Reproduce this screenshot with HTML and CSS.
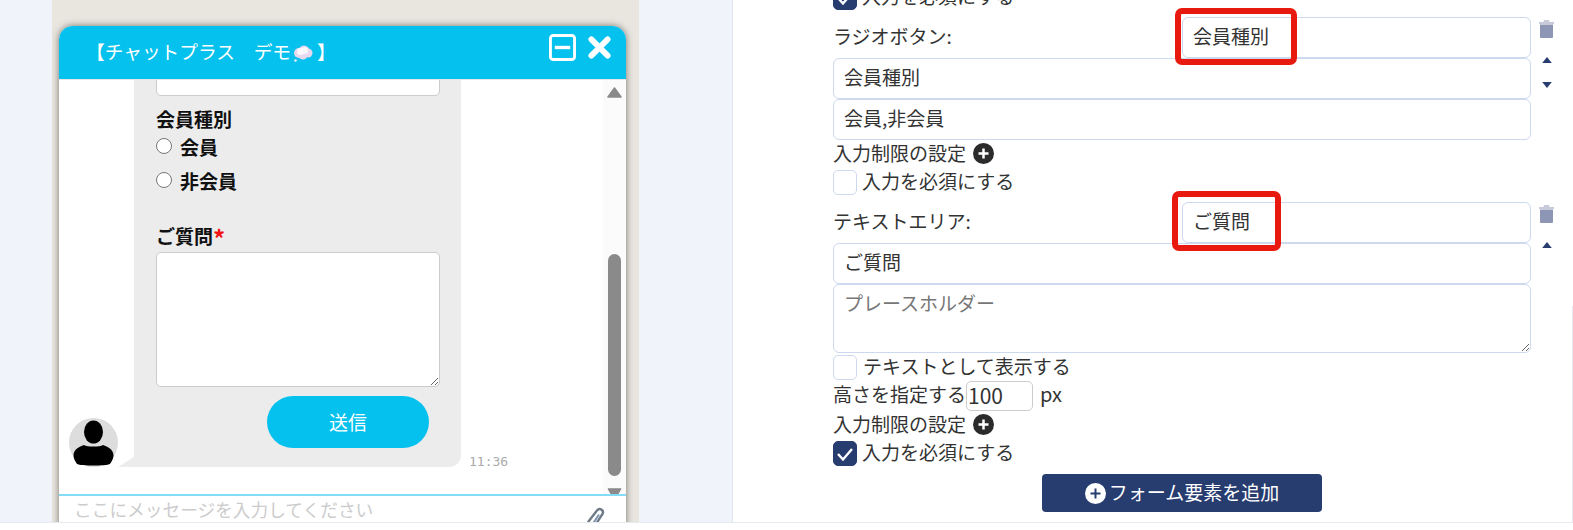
FILE: index.html
```html
<!DOCTYPE html>
<html lang="ja">
<head>
    <meta charset="UTF-8">
    <title>チャットフォーム設定</title>
    <link rel="stylesheet" href="styles.css">
</head>
<body>
    <div class="screen">
        <section class="preview">
            <div class="chat">
                <header class="chat-head">
                    <h1 class="chat-title">【チャットプラス　デモ<svg class="balloon" viewBox="0 0 20 17"><circle cx="2.500" cy="15.500" r="1.300" fill="#f3e9f6"/><g fill="#e6d8ee"><circle cx="6" cy="8" r="5"/><circle cx="11" cy="6" r="5.500"/><circle cx="15" cy="8" r="4.500"/><circle cx="10" cy="10" r="4.500"/></g><g fill="#fbf8fd"><circle cx="7.500" cy="6.500" r="3.500"/><circle cx="11.500" cy="5.500" r="3.500"/></g></svg>】</h1>
                    <div class="chat-tools">
                        <svg class="tool-min" viewBox="0 0 28 28"><rect x="1.500" y="1.500" width="25" height="25" rx="3" fill="none" stroke="#fff" stroke-width="3"/><path d="M6 14h16" stroke="#fff" stroke-width="3.500"/></svg>
                        <svg class="tool-close" viewBox="0 0 24 24"><path d="M3.500 3.500l17 17M20.500 3.500l-17 17" stroke="#fff" stroke-width="6" stroke-linecap="round"/></svg>
                    </div>
                </header>
                <div class="chat-main">
                    <div class="chat-log">
                        <div class="message">
                            <svg class="avatar" viewBox="0 0 49 49"><circle cx="24.500" cy="24.500" r="24.500" fill="#ddd"/><ellipse cx="24.500" cy="14" rx="9.500" ry="11.500"/><path d="M15 27c3 2 16 2 19 0 5 2 10 4 10.500 10 .2 3-1.500 6-3.500 9-4 2-29 2-33 0-2-3-3.700-6-3.500-9 .5-6 5.500-8 10.500-10z"/></svg>
                            <div class="bubble">
                                <form class="bubble-form">
                                    <input class="bubble-input" type="text">
                                    <div class="bubble-label bubble-label-type">会員種別</div>
                                    <label class="bubble-radio"><input type="radio" name="member"><span>会員</span></label>
                                    <label class="bubble-radio"><input type="radio" name="member"><span>非会員</span></label>
                                    <div class="bubble-label bubble-label-ask">ご質問<span class="required">*</span></div>
                                    <textarea class="bubble-area"></textarea>
                                    <button class="send" type="button">送信</button>
                                </form>
                            </div>
                            <time class="stamp">11:36</time>
                        </div>
                    </div>
                    <div class="chat-scroll">
                        <svg class="scroll-arrow" viewBox="0 0 15 11"><path d="M7.500 1L14 10H1z" fill="#8a8a8a" stroke="#8a8a8a" stroke-width="1.500" stroke-linejoin="round"/></svg>
                        <div class="scroll-thumb"></div>
                        <svg class="scroll-arrow-down" viewBox="0 0 15 6"><path d="M1 .8h13L11 6H4z" fill="#8a8a8a" stroke="#8a8a8a" stroke-linejoin="round"/></svg>
                    </div>
                </div>
                <div class="composer">
                    <input class="composer-input" type="text" placeholder="ここにメッセージを入力してください">
                    <svg class="clip" viewBox="0 0 18 20"><path d="M1.500 15.500L10 4.500c2.500-3 7.500-.5 5.500 3.500L9 18" fill="none" stroke="#6f7a88" stroke-width="2.400" stroke-linecap="round"/><path d="M5 19L12 8.500" fill="none" stroke="#7d93b0" stroke-width="2"/></svg>
                </div>
            </div>
        </section>

        <main class="editor">
            <div class="editor-body">
                <label class="check-row"><span class="check is-on"><svg viewBox="0 0 24 25"><path d="M5 13l5 5.500L19 8" fill="none" stroke="#fff" stroke-width="2.400"/></svg></span>入力を必須にする</label>

                <div class="field">
                    <div class="field-main">
                        <div class="field-title">
                            <span class="field-name">ラジオボタン:</span>
                            <input class="text-input title-input" type="text" value="会員種別">
                            <div class="mark mark-radio"></div>
                        </div>
                        <input class="text-input" type="text" value="会員種別">
                        <input class="text-input" type="text" value="会員,非会員">
                        <div class="limit-row">入力制限の設定<span class="plus"><svg viewBox="0 0 21 21"><circle cx="10.500" cy="10.500" r="10.500" fill="#2b2b2b"/><path d="M10.500 5.500v10M5.500 10.500h10" stroke="#fff" stroke-width="2.500"/></svg></span></div>
                        <label class="check-row"><span class="check"></span>入力を必須にする</label>
                    </div>
                    <div class="field-actions">
                        <svg class="trash" viewBox="0 0 15 18"><path d="M0 2.500h15V3.500H0zM4.500 1.500L5 .5h5l.5 1zM1 4.500h13V17a1 1 0 0 1-1 1H2a1 1 0 0 1-1-1z" fill="#8d96b4"/></svg>
                        <svg class="move move-up" viewBox="0 0 8 5"><path d="M4 0l4 5H0z" fill="#273c6f"/></svg>
                        <svg class="move move-down" viewBox="0 0 8 5"><path d="M0 0h8L4 5z" fill="#273c6f"/></svg>
                    </div>
                </div>

                <div class="field">
                    <div class="field-main">
                        <div class="field-title">
                            <span class="field-name">テキストエリア:</span>
                            <input class="text-input title-input" type="text" value="ご質問">
                            <div class="mark mark-area"></div>
                        </div>
                        <input class="text-input" type="text" value="ご質問">
                        <textarea class="text-area" placeholder="プレースホルダー"></textarea>
                        <label class="check-row check-row-tight"><span class="check"></span><span class="check-text-wide">テキストとして表示する</span></label>
                        <div class="height-row">高さを指定する<input class="height-input" type="text" value="100"><span class="unit">px</span></div>
                        <div class="limit-row">入力制限の設定<span class="plus"><svg viewBox="0 0 21 21"><circle cx="10.500" cy="10.500" r="10.500" fill="#2b2b2b"/><path d="M10.500 5.500v10M5.500 10.500h10" stroke="#fff" stroke-width="2.500"/></svg></span></div>
                        <label class="check-row"><span class="check is-on"><svg viewBox="0 0 24 25"><path d="M5 13l5 5.500L19 8" fill="none" stroke="#fff" stroke-width="2.400"/></svg></span>入力を必須にする</label>
                    </div>
                    <div class="field-actions">
                        <svg class="trash" viewBox="0 0 15 18"><path d="M0 2.500h15V3.500H0zM4.500 1.500L5 .5h5l.5 1zM1 4.500h13V17a1 1 0 0 1-1 1H2a1 1 0 0 1-1-1z" fill="#8d96b4"/></svg>
                        <svg class="move move-up" viewBox="0 0 8 5"><path d="M4 0l4 5H0z" fill="#273c6f"/></svg>
                    </div>
                </div>

                <button class="add-button" type="button"><svg viewBox="0 0 21 21"><circle cx="10.500" cy="10.500" r="10.500" fill="#fff"/><path d="M10.500 5.500v10M5.500 10.500h10" stroke="#273c6f" stroke-width="2"/></svg><span class="add-text">フォーム要素を追加</span></button>
            </div>
            <div class="page-scroll"></div>
        </main>
    </div>
    <div class="page-foot"></div>
</body>
</html>
```

FILE: styles.css
```css
* {
    box-sizing: border-box;
}

body {
    margin: 0;
    height: 530px;
    overflow: hidden;
    background: #fff;
    color: #333;
    font-family: "Noto Sans CJK JP", "Noto Sans", sans-serif;
    font-size: 19px;
}

input, textarea, button {
    font-family: inherit;
    font-size: inherit;
    color: inherit;
}

.screen {
    display: flex;
    height: 522px;
    padding-left: 52px;
    background: #f0f4fa;
    overflow: hidden;
}

.page-foot {
    height: 8px;
    border-top: 1px solid #e8e8f0;
    background: #fff;
}

/* chat preview */
.preview {
    width: 587px;
    margin-right: 93px;
    padding: 26px 13px 0 7px;
    background: #e9e6e0;
}

.chat {
    display: flex;
    flex-direction: column;
    width: 567px;
    height: 510px;
    background: #fff;
    border-radius: 14px 14px 0 0;
    box-shadow: 0 0 7px #77746c;
}

.chat-head {
    display: flex;
    flex: none;
    align-items: center;
    justify-content: space-between;
    height: 53px;
    padding: 0 15px 0 27px;
    background: #04c1ed;
    border-radius: 14px 14px 0 0;
}

.chat-title {
    display: flex;
    align-items: center;
    margin: 0 0 4px;
    color: #fff;
    font-size: 18.700px;
    font-weight: 400;
}

.balloon {
    width: 20px;
    height: 17px;
    margin: 6px 4px 0 2px;
}

.chat-tools {
    display: flex;
    align-items: center;
    gap: 12px;
    margin-bottom: 11px;
}

.tool-min {
    width: 27px;
    height: 27px;
}

.tool-close {
    width: 23px;
    height: 23px;
}

.chat-main {
    display: flex;
    flex: none;
    height: 415px;
    border-top: 1px solid #e6e6e6;
    overflow: hidden;
}

.chat-log {
    display: flex;
    flex: 1;
    flex-direction: column;
    justify-content: flex-end;
    padding: 0 0 27px 10px;
    overflow: hidden;
}

.message {
    display: flex;
    flex: none;
    align-items: flex-end;
}

.avatar {
    flex: none;
    width: 49px;
    height: 49px;
}

.bubble {
    position: relative;
    width: 327px;
    margin-left: 16px;
    padding: 0 21px 19px 22px;
    background: #ececec;
    border-radius: 0 0 12px 0;
}

.bubble::before {
    content: "";
    position: absolute;
    left: -16px;
    bottom: 0;
    border-bottom: 10px solid #ececec;
    border-left: 16px solid transparent;
}

.bubble-form {
    display: flex;
    flex-direction: column;
    color: #111;
    font-size: 19px;
    font-weight: 700;
}

.bubble-input {
    height: 40px;
    background: #fff;
    border: 1px solid #ccc;
    border-radius: 5px;
}

.bubble-label {
    line-height: 26px;
}

.bubble-label-type {
    margin-top: 10px;
    margin-bottom: -3px;
}

.bubble-label-ask {
    margin-top: 26px;
}

.required {
    color: #f01414;
    font-size: 24px;
    line-height: 0;
    vertical-align: -4px;
}

.bubble-radio {
    display: flex;
    align-items: center;
    height: 34px;
}

.bubble-radio input {
    width: 16px;
    height: 16px;
    margin: 0 8px 0 0;
}

.bubble-area {
    height: 135px;
    margin-top: 3px;
    background: #fff;
    border: 1px solid #ccc;
    border-radius: 5px;
}

.send {
    align-self: flex-end;
    width: 162px;
    height: 52px;
    margin: 9px 11px 0 0;
    padding-bottom: 3px;
    background: #04c1ed;
    border: none;
    border-radius: 26px;
    color: #fff;
    font-size: 19px;
    font-weight: 400;
}

.stamp {
    margin: 0 0 -3px 8px;
    color: #aaa;
    font-family: "DejaVu Sans Mono", monospace;
    font-size: 13px;
    line-height: 17px;
}

.chat-scroll {
    display: flex;
    flex: none;
    flex-direction: column;
    align-items: center;
    width: 23px;
    padding-top: 7px;
    background: #fbfbfb;
}

.scroll-arrow {
    width: 15px;
    height: 11px;
}

.scroll-thumb {
    width: 13px;
    height: 222px;
    margin-top: auto;
    background: #8a8a8a;
    border-radius: 7px;
}

.scroll-arrow-down {
    width: 15px;
    height: 6px;
    margin-top: 12px;
}

.composer {
    display: flex;
    flex: 1;
    align-items: flex-start;
    border-top: 2px solid #85dcf6;
    overflow: hidden;
}

.composer-input {
    flex: 1;
    height: 26px;
    padding: 0 0 0 15px;
    background: none;
    border: none;
    font-size: 17.700px;
}

.composer-input::placeholder {
    color: #ccc;
}

.clip {
    width: 18px;
    height: 20px;
    margin: 10px 21px 0 0;
}

/* form editor */
.editor {
    position: relative;
    display: flex;
    flex: 1;
    flex-direction: column;
    justify-content: flex-end;
    padding: 0 0 10px 100px;
    background: #fff;
    border-left: 1px solid #e2e6f0;
    overflow: hidden;
}

.editor-body {
    display: flex;
    flex: none;
    flex-direction: column;
    line-height: 26px;
}

.check-row {
    display: flex;
    align-items: flex-start;
    height: 25px;
    margin-top: 4px;
    gap: 5px;
    line-height: 22px;
}

.check-row-tight {
    margin-top: 2px;
}

.check-text-wide {
    margin-left: 1px;
}

.check {
    display: block;
    flex: none;
    width: 24px;
    height: 25px;
    background: #fff;
    border: 1px solid #cdd9ee;
    border-radius: 5px;
}

.check.is-on {
    background: #273c6f;
    border-color: #273c6f;
}

.check svg {
    display: block;
    width: 24px;
    height: 25px;
    margin: -1px;
}

.field {
    display: flex;
    flex: none;
    margin-top: 7px;
}

.field-main {
    display: flex;
    flex-direction: column;
    width: 698px;
}

.field-title {
    position: relative;
    display: flex;
    align-items: center;
}

.field-name {
    flex: 1;
    padding-bottom: 4px;
}

.text-input {
    height: 41px;
    padding: 0 10px 4px;
    background: #fff;
    border: 1px solid #cdd9ee;
    border-radius: 6px;
}

.title-input {
    width: 349px;
}

.text-area {
    height: 69px;
    padding: 4px 10px;
    background: #fff;
    border: 1px solid #cdd9ee;
    border-radius: 6px;
}

.text-area::placeholder {
    color: #777;
}

.limit-row {
    display: flex;
    align-items: center;
    height: 26px;
}

.plus {
    display: block;
    width: 21px;
    height: 21px;
    margin-left: 7px;
}

.plus svg, .add-button svg {
    display: block;
    flex: none;
    width: 21px;
    height: 21px;
}

.height-row {
    display: flex;
    align-items: flex-start;
    height: 30px;
    margin-top: 1px;
}

.height-input {
    width: 67px;
    height: 30px;
    padding: 0 0 2px 1px;
    background: #fff;
    border: 1px solid #ccc;
    border-radius: 5px;
    font-size: 21px;
}

.unit {
    margin-left: 7px;
    font-size: 20px;
}

.field-actions {
    display: flex;
    flex-direction: column;
    align-items: center;
    width: 15px;
    margin-left: 8px;
    padding-top: 3px;
}

.trash {
    width: 15px;
    height: 18px;
}

.move {
    width: 10px;
    height: 6px;
}

.move-up {
    margin-top: 19px;
}

.move-down {
    margin-top: 19px;
}

.add-button {
    display: flex;
    align-items: center;
    justify-content: center;
    align-self: flex-start;
    gap: 3px;
    width: 280px;
    height: 38px;
    margin: 8px 0 0 209px;
    background: #273c6f;
    border: none;
    border-radius: 4px;
    color: #fff;
}

.add-text {
    padding-bottom: 3px;
}

/* red marks laid over the screenshot */
.mark {
    position: absolute;
    border: 6px solid #e8190f;
    border-radius: 7px;
    pointer-events: none;
}

.mark-radio {
    left: 342px;
    top: -9px;
    width: 122px;
    height: 57px;
}

.mark-area {
    left: 339px;
    top: -11px;
    width: 109px;
    height: 60px;
}

.page-scroll {
    position: absolute;
    right: 0;
    top: 306px;
    width: 1px;
    height: 216px;
    background: #e8e8f0;
}
```
